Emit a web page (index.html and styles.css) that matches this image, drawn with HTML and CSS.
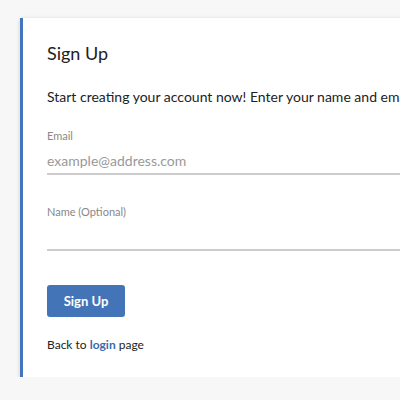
FILE: index.html
```html
<!DOCTYPE html>
<html>
<head>
<meta charset="utf-8">
<link rel="stylesheet" href="styles.css">
</head>
<body>
<div class="card">
  <h1 class="title">Sign Up</h1>
  <p class="intro">Start creating your account now! Enter your name and email address below.</p>
  <label class="field">
    <span class="label">Email</span>
    <input class="input" type="text" placeholder="example@address.com">
  </label>
  <label class="field field-second">
    <span class="label">Name (Optional)</span>
    <input class="input" type="text">
  </label>
  <button class="btn">Sign Up</button>
  <p class="back">Back to <a class="link" href="#">login</a> page</p>
</div>
</body>
</html>
```
FILE: styles.css
```css
html, body {
  margin: 0;
  background: #f7f7f7;
}
body {
  padding: 18px 0 0 20px;
  font-family: Lato, "Open Sans", sans-serif;
  color: #222;
}
.card {
  width: 600px;
  background: #fff;
  border-left: 3px solid #4275ba;
  box-shadow: 0 1px 4px rgba(0,0,0,0.18);
  padding: 24px 24px 24px 24px;
  box-sizing: border-box;
}
.title {
  margin: 0;
  font-size: 18px;
  line-height: 22px;
  font-weight: 400;
}
.intro {
  margin: 23px 0 0;
  font-size: 14px;
  line-height: 20px;
  white-space: nowrap;
}
.field {
  display: flex;
  flex-direction: column;
  margin-top: 22px;
}
.field-second {
  margin-top: 30px;
}
.label {
  font-size: 11px;
  line-height: 14px;
  color: #888;
}
.input {
  margin-top: 7px;
  border: 0;
  border-bottom: 2px solid #ccc;
  padding: 0 0 3px;
  font-family: inherit;
  font-size: 14px;
  line-height: 20px;
  height: 25px;
  box-sizing: border-box;
  color: #222;
  outline: none;
  background: transparent;
}
.input::placeholder {
  color: #999;
}
.btn {
  display: block;
  margin-top: 34px;
  width: 78px;
  height: 32px;
  border: 0;
  border-radius: 3px;
  background: #4474b8;
  color: #fff;
  font-family: inherit;
  font-size: 13px;
  font-weight: 700;
  padding: 0;
}
.back {
  margin: 20px 0 0;
  font-size: 12px;
  line-height: 16px;
}
.link {
  color: #3a6aae;
  font-weight: 700;
  text-decoration: none;
}
```
